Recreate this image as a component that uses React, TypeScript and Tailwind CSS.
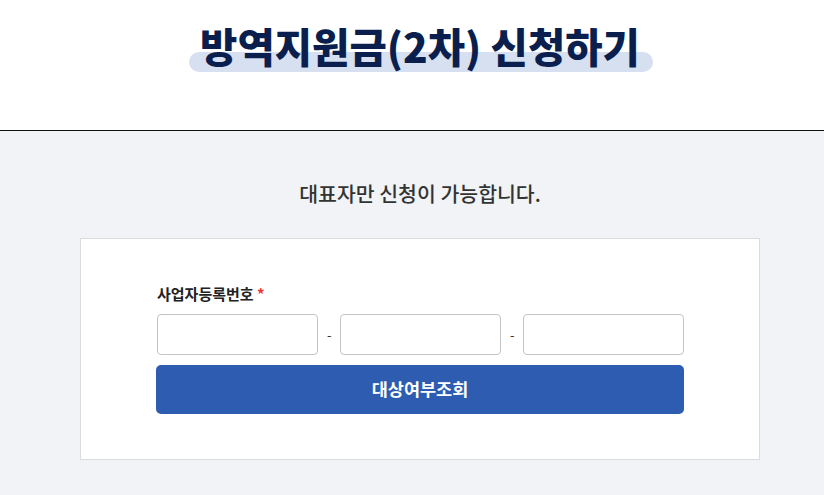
export default function App() {
  const font = { fontFamily: '"Noto Sans CJK KR", "Noto Sans", sans-serif' };
  return (
    <div className="w-[824px] h-[495px] overflow-hidden bg-[#f1f3f7]" style={font}>
      <div className="w-[840px]">
        <header className="h-[131px] bg-white border-b border-[#111] flex justify-center">
          <div className="relative mt-[16px] h-[60px] flex justify-center">
            <div className="absolute left-[-11px] right-[-13px] top-[36px] h-[20px] rounded-full bg-[#d7e0f1]" />
            <h1 className="relative text-[40.6px] leading-[60px] font-black text-[#0b1f4f]">
              방역지원금(2차) 신청하기
            </h1>
          </div>
        </header>
        <main className="flex flex-col items-center">
          <p className="mt-[48px] text-[20.5px] leading-[28px] text-[#333] font-medium">대표자만 신청이 가능합니다.</p>
          <div className="mt-[31px] w-[680px] h-[222px] bg-white border border-[#dcdcdc] pl-[75px] pr-[75px] pt-[44px]">
            <div className="ml-[1px] text-[15px] leading-[22px] font-bold text-[#222]">
              사업자등록번호 <span className="text-[#e33]">*</span>
            </div>
            <div className="mt-[9px] ml-[1px] flex items-center">
              <input className="w-[161px] h-[41px] border border-[#c4c4c4] rounded-[4px] bg-white" />
              <span className="w-[23px] text-center text-[13px] text-[#333]">-</span>
              <input className="w-[161px] h-[41px] border border-[#c4c4c4] rounded-[4px] bg-white" />
              <span className="w-[22px] text-center text-[13px] text-[#333]">-</span>
              <input className="w-[161px] h-[41px] border border-[#c4c4c4] rounded-[4px] bg-white" />
            </div>
            <button className="mt-[10px] w-[528px] h-[49px] rounded-[5px] bg-[#2d5cb0] text-white text-[17.5px] font-bold">
              대상여부조회
            </button>
          </div>
        </main>
      </div>
    </div>
  );
}
